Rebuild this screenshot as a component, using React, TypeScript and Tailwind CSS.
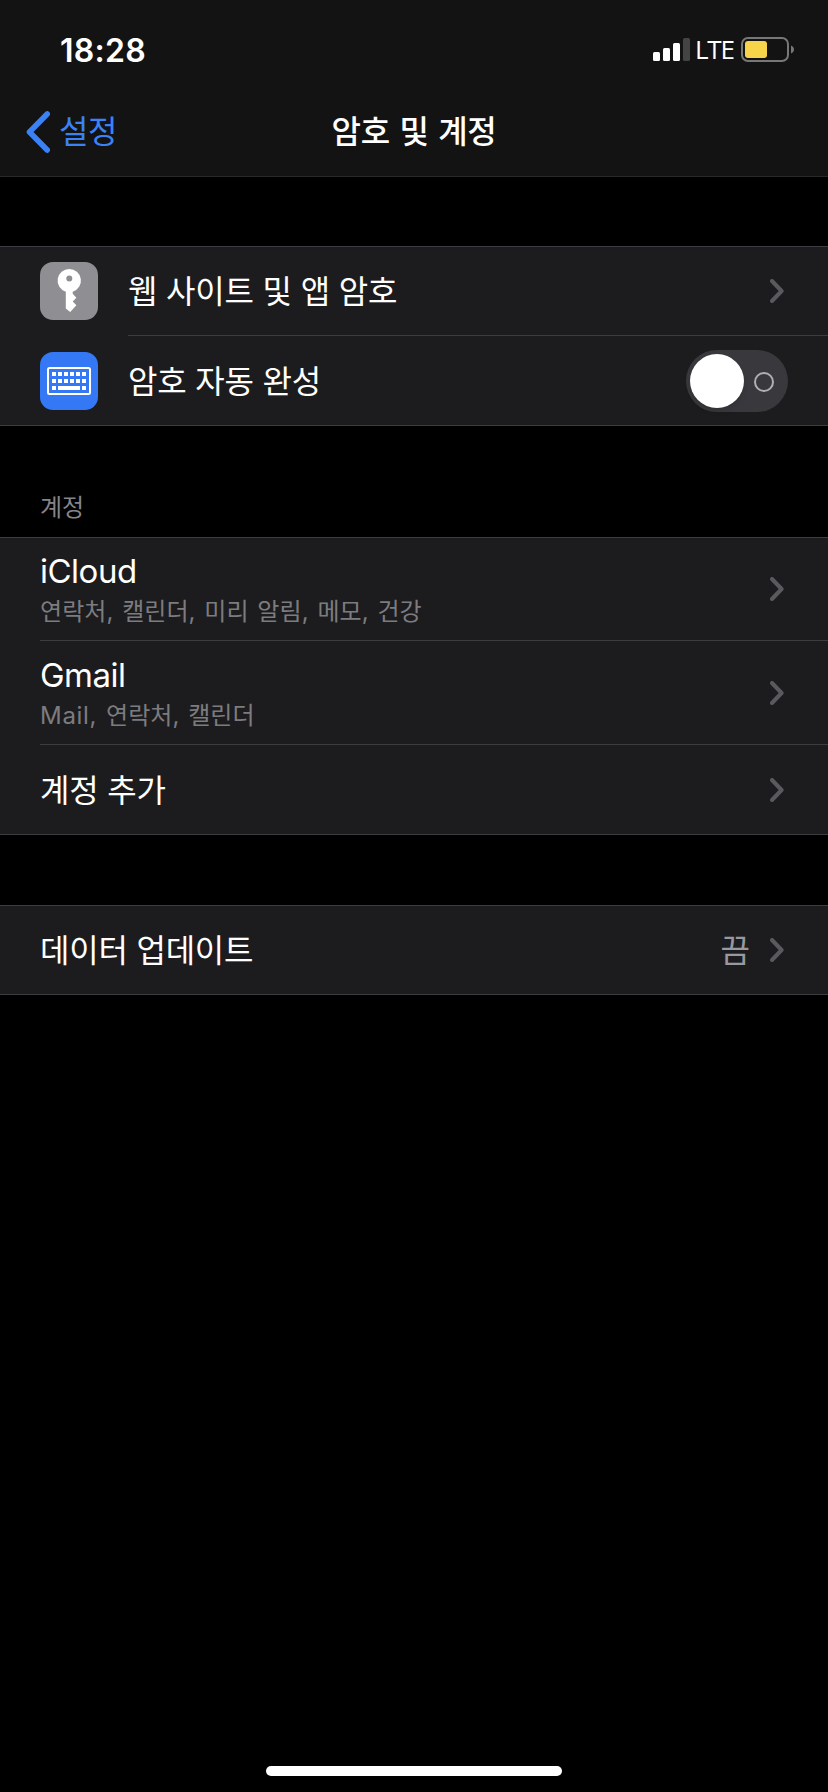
import { FC, ReactNode } from "react";

const Chevron: FC = () => (
  <svg width="14" height="24" viewBox="0 0 14 24" fill="none" className="shrink-0">
    <path d="M2 2L11.6 12L2 22" stroke="#5a5a5e" strokeWidth="4" strokeLinecap="round" strokeLinejoin="round" />
  </svg>
);

const KeyIcon: FC = () => (
  <svg width="58" height="58" viewBox="0 0 58 58" className="shrink-0">
    <rect width="58" height="58" rx="13" fill="#8e8e93" />
    <path
      fill="#fff"
      fillRule="evenodd"
      d="M29.3 7a11.6 11.6 0 0 1 3.4 22.7v2.1l3.7 3.9l-3.7 3.7l3.7 3.9L30.2 50l-4.4-3.4V29.7A11.6 11.6 0 0 1 29.3 7ZM29.3 13.6a3 3 0 1 0 0 6a3 3 0 0 0 0-6Z"
    />
  </svg>
);

const KeyboardIcon: FC = () => (
  <svg width="58" height="58" viewBox="0 0 58 58" className="shrink-0">
    <rect width="58" height="58" rx="13" fill="#3478f6" />
    <rect x="8" y="16" width="42" height="26" rx="1.5" fill="none" stroke="#fff" strokeWidth="2" />
    {[20, 27].map((y) =>
      [12, 18, 24, 30, 36, 42].map((x) => <rect key={`${x}-${y}`} x={x} y={y} width="4" height="4" fill="#fff" />)
    )}
    <path d="M12 34h4v4h-4zM18 34h22v4H18zM42 34h4v4h-4z" fill="#fff" />
  </svg>
);

const StatusBar: FC = () => (
  <div className="flex h-[88px] items-start justify-between pl-[60px] pr-[34px]">
    <p className="mt-[30px] font-[Inter] text-[32px] leading-[41px] font-semibold tracking-[0.3px]">18:28</p>
    <div className="mt-[37px] flex items-start">
      <svg width="37" height="25" viewBox="0 0 37 25">
        <rect x="0" y="15" width="7" height="9" rx="1.5" fill="#fff" />
        <rect x="10" y="11" width="7" height="13" rx="1.5" fill="#fff" />
        <rect x="20" y="6" width="7" height="18" rx="1.5" fill="#fff" />
        <rect x="30" y="1" width="7" height="23" rx="1.5" fill="#444" />
      </svg>
      <p className="ml-[5px] w-[46px] font-['Open_Sans'] text-[26px] leading-6 font-medium tracking-[-1.2px]">LTE</p>
      <svg width="53" height="25" viewBox="0 0 53 25">
        <rect x="1" y="1" width="46" height="23" rx="6" fill="none" stroke="#777" strokeWidth="2" />
        <rect x="4" y="4" width="22" height="17" rx="3" fill="#f7d54a" />
        <path d="M50 8.500c4 1.500 4 6.500 0 8z" fill="#777" />
      </svg>
    </div>
  </div>
);

const NavBar: FC = () => (
  <div className="flex h-[88px] items-center">
    <div className="flex w-[276px] items-center pl-[26px] text-[#3b82f6]">
      <svg width="24" height="42" viewBox="0 0 24 42" fill="none">
        <path d="M21.200 3L3.500 21L21.200 39" stroke="currentColor" strokeWidth="5.600" strokeLinecap="round" strokeLinejoin="round" />
      </svg>
      <p className="mb-1.5 ml-[9px] text-[32px] leading-[44px] tracking-[-0.5px]">설정</p>
    </div>
    <h1 className="mb-1.5 w-[276px] text-center text-[32px] leading-[44px] font-medium tracking-[-0.4px] [word-spacing:3px]">
      암호 및 계정
    </h1>
  </div>
);

interface GroupProps {
  children: ReactNode;
  className?: string;
}

const Group: FC<GroupProps> = ({ children, className = "" }) => (
  <section className={`flex flex-col border-y border-[#3d3d41] bg-[#1c1c1e] ${className}`}>{children}</section>
);

interface RowProps {
  title: string;
  text?: ReactNode;
  value?: string;
  icon?: ReactNode;
  control?: ReactNode;
  divider?: boolean;
  height: string;
}

const Row: FC<RowProps> = ({ title, text, value, icon, control, divider, height }) => (
  <div className={`flex pl-10 ${height}`}>
    {icon && <div className={`flex w-[88px] items-center ${divider ? "pb-px" : "pt-px"}`}>{icon}</div>}
    <div className={`flex flex-1 items-center ${divider ? "border-b border-[#3d3d41]" : ""}`}>
      {text ? (
        <div className="flex-1 pt-[3px] font-[Inter,'Noto_Sans_CJK_KR',sans-serif]">
          <p className="text-[33px] leading-[41px] tracking-[-0.5px]">{title}</p>
          <p className="mt-0.5 text-2xl leading-9 tracking-[0.05px] text-[#7c7c80] [word-spacing:2px]">{text}</p>
        </div>
      ) : (
        <p className="mb-1 flex-1 text-[32px] leading-[44px] tracking-[-0.25px] [word-spacing:2px]">{title}</p>
      )}
      {value && <p className="mr-5 mb-1 text-[32px] leading-[44px] text-[#98989f]">{value}</p>}
      {control ?? (
        <div className="mr-11">
          <Chevron />
        </div>
      )}
    </div>
  </div>
);

const Toggle: FC = () => (
  <button
    role="switch"
    aria-checked="false"
    className="mr-10 flex h-[62px] w-[102px] items-center justify-between rounded-full bg-[#39393d] pr-3.5 pl-1"
  >
    <span className="size-[54px] rounded-full bg-white shadow-md" />
    <span className="mt-0.5 size-5 rounded-full border-2 border-[#b0b0b2]" />
  </button>
);

export default function App() {
  return (
    <div className="flex h-[1792px] w-[828px] flex-col bg-black font-['Noto_Sans_CJK_KR',sans-serif] text-white">
      <header className="h-[177px] border-b border-[#29292b] bg-[#131313]">
        <StatusBar />
        <NavBar />
      </header>
      <main className="flex-1">
        <Group className="mt-[69px]">
          <Row title="웹 사이트 및 앱 암호" icon={<KeyIcon />} divider height="h-[89px]" />
          <Row title="암호 자동 완성" icon={<KeyboardIcon />} control={<Toggle />} height="h-[89px]" />
        </Group>
        <h2 className="mt-[62px] mb-[13px] pl-10 text-2xl leading-9 text-[#85858a]">계정</h2>
        <Group>
          <Row title="iCloud" text="연락처, 캘린더, 미리 알림, 메모, 건강" divider height="h-[103px]" />
          <Row
            title="Gmail"
            text={
              <>
                <span className="tracking-[0.7px]">Mail,</span> 연락처, 캘린더
              </>
            }
            divider
            height="h-[104px]"
          />
          <Row title="계정 추가" height="h-[89px]" />
        </Group>
        <Group className="mt-[70px]">
          <Row title="데이터 업데이트" value="끔" height="h-[88px]" />
        </Group>
      </main>
      <footer className="flex justify-center pb-4">
        <div className="h-2.5 w-[296px] rounded-full bg-white" />
      </footer>
    </div>
  );
}
